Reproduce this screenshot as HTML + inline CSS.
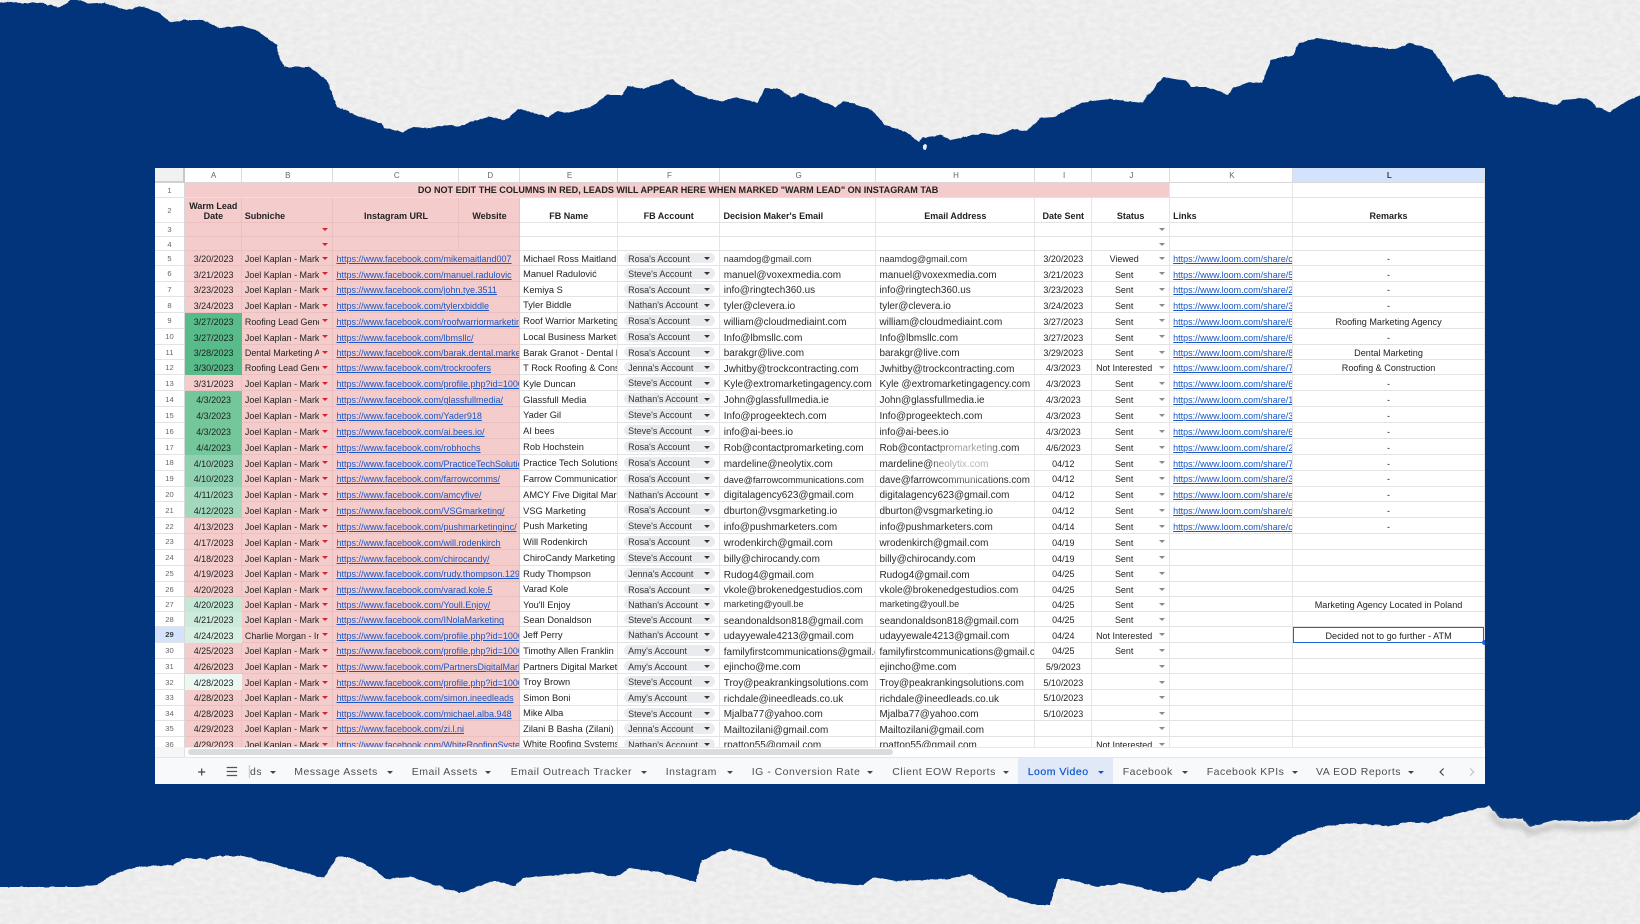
<!DOCTYPE html>
<html lang="en">
<head>
<meta charset="utf-8">
<title>Loom Video Sheet</title>
<style>
html,body{margin:0;padding:0;width:1640px;height:924px;overflow:hidden;background:#01347a}
body{position:relative;font-family:"Liberation Sans",Arial,sans-serif;color:#222}
svg.bg{position:absolute;left:0;top:0}
#sheet{position:absolute;left:155px;top:168px;width:1330px;height:616px;background:#fff;overflow:hidden;filter:blur(.35px)}
#grid{position:absolute;left:0;top:0;width:1330px;height:579px;overflow:hidden;display:grid;
grid-template-columns:30px 56.7px 91.8px 126px 61px 97.5px 102.5px 155.7px 159.3px 56.7px 78px 123px 191.8px;
grid-template-rows:15px 15px 24.5px 14.5px 14px 15px 15.7px 15.6px 15.7px 16px 15.7px 15.3px 15.5px 16px 15.8px 15.7px 16.3px 15.7px 15.8px 15.9px 15.7px 16px 15.6px 16px 15.8px 15.9px 15.1px 15.2px 15.4px 15.3px 16px 15.8px 15.5px 15.7px 15.3px 15.7px 15.3px}
#grid>div{box-sizing:border-box;min-width:0;overflow:hidden;white-space:nowrap;display:flex;align-items:center;position:relative;border-right:1px solid #e6e6e6;border-bottom:1px solid #e3e3e3;font-size:9.2px}
#grid>.h{justify-content:center;font-size:8px;color:#666;border-bottom:1px solid #d8d8d8;border-right:1px solid #dcdcdc;padding-left:1.5px}
#grid>.cn{background:#f1f1f1;border-right:2px solid #c8c8c8;border-bottom:2px solid #d0d0d0}
#grid>.sel{background:#d3e3fd;color:#3c4043;font-weight:700}
#grid>.rn{justify-content:center;font-size:7.6px;color:#666;border-right:1px solid #d8d8d8;padding-top:1px}
#grid>.rs{background:#d3e3fd;color:#3c4043;font-weight:700}
#grid>.p{background:#f4cccc;border-right-color:#ecc0c0;border-bottom-color:#ecc0c0}
#grid>.tt{justify-content:center;font-weight:700;font-size:9.05px;background:#f4cccc;color:#222;padding-left:2px}
#grid>.hd{font-weight:700;font-size:9px;align-items:flex-end;padding-bottom:1px;justify-content:center}
#grid>.lh{justify-content:flex-start;padding-left:3px}
#grid>.wl{white-space:normal;text-align:center;line-height:10.5px;padding-bottom:0;font-size:9px;padding-left:1px}
#grid>.d{justify-content:center;font-size:8.95px;background:#f4cccc;border-right-color:#ecc0c0;border-bottom-color:#ecc0c0;padding-left:1.5px;padding-top:2.5px}
#grid>.g1{background:#57bb8a;border-color:#57bb8a}
#grid>.g2{background:#74c69b;border-color:#74c69b}
#grid>.g3{background:#8fd1b0;border-color:#8fd1b0}
#grid>.g4{background:#a2d9bd;border-color:#a2d9bd}
#grid>.g5{background:#c4e7d6;border-color:#c4e7d6}
#grid>.g6{background:#cdebdc;border-color:#cdebdc}
#grid>.g7{background:#d8efe3;border-color:#d8efe3}
#grid>.g8{background:#ebf7f1;border-color:#ebf7f1}
#grid>.s{padding-left:3.2px;padding-top:2.5px;font-size:8.95px;background:#f4cccc;border-right-color:#ecc0c0;border-bottom-color:#ecc0c0}
#grid>.s::after{content:"";position:absolute;right:0;top:0;bottom:0;width:13.3px;background:#f4cccc}
#grid>.s::before{content:"";position:absolute;z-index:1;right:4.4px;top:50%;margin-top:-1px;border-left:3px solid transparent;border-right:3px solid transparent;border-top:3.2px solid #d8222a}
#grid>.l{padding-left:3px;padding-top:2.5px;font-size:9px;color:#1a56c4;text-decoration:underline;background:#f4cccc;border-right-color:#ecc0c0;border-bottom-color:#ecc0c0;grid-column:span 2}
#grid>.k{padding-left:3px;padding-top:2.5px;font-size:9px;color:#1a56c4;text-decoration:underline}
#grid>.n{padding-left:2.7px;font-size:9.25px;padding-top:1.5px}
#grid>.e{padding-left:3.3px;font-size:9.95px;padding-top:4px;color:#2a2a2a}
#grid>.e9{padding-left:3.3px;font-size:9px;color:#333;padding-top:1px}
#grid>.c{justify-content:center;font-size:8.95px;padding-top:2.5px}
#grid>.r{justify-content:center;font-size:9.1px;padding-top:2.5px}
#grid>.st{justify-content:center;padding-right:13px;font-size:8.95px;padding-top:2.5px}
#grid>.st::after{content:"";position:absolute;right:4.2px;top:50%;margin-top:-1px;border-left:3px solid transparent;border-right:3px solid transparent;border-top:3px solid #8a8a8a}
#grid>.fa b{display:block;position:absolute;left:5.8px;top:2px;bottom:2px;width:91.7px;border-radius:6px;background:#e9ebef;font-weight:400;font-size:9px;line-height:12px;padding-left:4.4px;box-sizing:border-box;color:#333}
#grid>.fa b::after{content:"";position:absolute;right:5.3px;top:50%;margin-top:-1px;border-left:3px solid transparent;border-right:3px solid transparent;border-top:3.2px solid #333}
#selbox{position:absolute;left:1138px;top:459.4px;width:190.5px;height:15.2px;box-sizing:border-box;border:1.3px solid #1a66d8}
#handle{position:absolute;left:1326.5px;top:471.7px;width:5px;height:5px;border-radius:50%;background:#1a66d8}
#fade{position:absolute;left:775px;top:270px;width:80px;height:46px;background:radial-gradient(ellipse at center,rgba(255,255,255,.72),rgba(255,255,255,.55) 45%,rgba(255,255,255,0) 75%)}
#track{position:absolute;left:0;top:579px;width:1330px;height:10px;background:#fff;border-top:1px solid #e8e8e8;box-sizing:border-box}
#gut{position:absolute;left:0;top:579px;width:30px;height:10px;background:#f6f6f6;border-right:1px solid #e2e2e2;box-sizing:border-box}
#thumb{position:absolute;left:32.7px;top:581.3px;width:705.6px;height:5.7px;border-radius:3px;background:#dadce0}
#tabs{position:absolute;left:0;top:589px;width:1330px;height:27px;background:#f8f9fa;border-top:1px solid #e6e6e6;box-sizing:border-box}
#tabs span{position:absolute;top:0;line-height:29px;font-size:10.5px;letter-spacing:.5px;color:#4b5054;white-space:nowrap}
#tabs i{position:absolute;top:13px;border-left:3px solid transparent;border-right:3px solid transparent;border-top:3.2px solid #444}
#loom{position:absolute;left:863.3px;top:0;width:95px;height:26px;background:#e1e9f8}
#tabs span.on{color:#0b57d0;-webkit-text-stroke:.2px #0b57d0}
#tabs svg{position:absolute;left:0;top:1px}
</style>
</head>
<body>
<svg class="bg" width="1640" height="924" viewBox="0 0 1640 924" xmlns="http://www.w3.org/2000/svg">
<defs>
<filter id="paper" filterUnits="userSpaceOnUse" x="-20" y="-20" width="1680" height="964" color-interpolation-filters="sRGB">
<feTurbulence type="fractalNoise" baseFrequency=".16" numOctaves="3" seed="7" result="n1"/>
<feDisplacementMap in="SourceGraphic" in2="n1" scale="2.5" xChannelSelector="R" yChannelSelector="G" result="shape"/>
<feTurbulence type="fractalNoise" baseFrequency=".14 .22" numOctaves="4" seed="11" result="n2"/>
<feColorMatrix in="n2" type="matrix" values=".06 0 0 0 .9  .06 0 0 0 .9  .06 0 0 0 .9  0 0 0 0 1" result="tex"/>
<feComposite in="tex" in2="shape" operator="in"/>
</filter>
<filter id="sh" x="-5%" y="-50%" width="110%" height="200%"><feGaussianBlur stdDeviation="3"/></filter>
</defs>
<rect width="1640" height="924" fill="#01347a"/>
<g filter="url(#paper)">
<polygon fill="#fff" points="-20,-20 1660,-20 1660,95 1640,95 1625,102 1610,112 1597,107 1586,98 1563,100 1557,105 1521,97 1505,97 1492,78 1479,74 1461,77 1453,82 1445,67 1432,50 1411,43 1395,49 1369,47 1348,43 1317,38 1299,43 1293,55 1271,60 1262,83 1251,82 1233,88 1228,95 1207,87 1191,87 1186,81 1163,77 1142,103 1110,99 1084,102 1061,113 1055,117 1040,118 1027,131 1013,129 998,135 982,133 951,140 940,135 922,138 919,142 906,132 885,125 872,110 844,101 836,107 820,100 800,93 792,98 779,89 765,88 758,103 735,97 722,102 696,95 680,85 672,79 643,89 628,86 622,95 607,95 591,107 567,113 557,111 549,117 518,109 505,120 489,117 476,120 458,127 450,125 429,128 413,127 403,132 384,128 382,123 361,117 337,107 327,80 309,67 285,67 280,60 277,45 256,30 241,26 220,28 201,20 183,20 170,22 157,12 141,6 126,10 105,3 89,4 73,-2 65,5 58,7 42,3 21,3 0,2 -20,2"/>
<ellipse fill="#fff" cx="925" cy="147" rx="2.2" ry="3"/>
<polygon fill="#fff" points="-20,887 0,887 31,887 78,887 97,885 112,875 136,867 173,865 186,858 207,859 214,856 243,856 324,878 337,857 350,857 371,867 386,879 411,877 460,893 494,881 515,886 523,878 591,872 616,877 630,868 662,873 696,882 701,861 717,853 731,849 764,858 774,867 820,882 830,883 862,885 875,877 896,881 948,879 969,874 993,887 1008,897 1037,905 1050,905 1058,879 1068,879 1097,887 1123,883 1163,893 1186,890 1198,878 1211,881 1220,871 1244,864 1251,856 1270,854 1293,837 1322,827 1351,823 1390,826 1408,822 1429,823 1445,817 1463,812 1489,806 1500,818 1523,819 1529,827 1555,820 1584,822 1628,820 1640,812 1660,812 1660,944 -20,944"/>
</g>
<path d="M1490,812 L1500,824 L1523,825 L1529,833 L1555,826 L1584,828 L1628,826 L1640,818" fill="none" stroke="#9a9a9a" stroke-width="5" opacity=".55" filter="url(#sh)"/>
</svg>

<div id="sheet">
<div id="grid">
<!-- header -->
<div class="h cn"></div><div class="h">A</div><div class="h">B</div><div class="h">C</div><div class="h">D</div><div class="h">E</div><div class="h">F</div><div class="h">G</div><div class="h">H</div><div class="h">I</div><div class="h">J</div><div class="h">K</div><div class="h sel">L</div>
<!-- 1 -->
<div class="rn">1</div><div class="tt" style="grid-column:span 10">DO NOT EDIT THE COLUMNS IN RED, LEADS WILL APPEAR HERE WHEN MARKED "WARM LEAD" ON INSTAGRAM TAB</div><div></div><div></div>
<!-- 2 -->
<div class="rn">2</div><div class="hd p wl">Warm Lead<br>Date</div><div class="hd p lh">Subniche</div><div class="hd p">Instagram URL</div><div class="hd p">Website</div><div class="hd">FB Name</div><div class="hd">FB Account</div><div class="hd lh">Decision Maker's Email</div><div class="hd">Email Address</div><div class="hd">Date Sent</div><div class="hd">Status</div><div class="hd lh">Links</div><div class="hd">Remarks</div>
<!-- 3 -->
<div class="rn">3</div><div class="p"></div><div class="s"></div><div class="p"></div><div class="p"></div><div></div><div></div><div></div><div></div><div></div><div class="st"></div><div></div><div></div>
<!-- 4 -->
<div class="rn">4</div><div class="p"></div><div class="s"></div><div class="p"></div><div class="p"></div><div></div><div></div><div></div><div></div><div></div><div class="st"></div><div></div><div></div>
<!-- 5 -->
<div class="rn">5</div><div class="d">3/20/2023</div><div class="s">Joel Kaplan - Marketing</div><div class="l">https://www.facebook.com/mikemaitland007</div><div class="n">Michael Ross Maitland</div><div class="fa"><b>Rosa's Account</b></div><div class="e9">naamdog@gmail.com</div><div class="e9">naamdog@gmail.com</div><div class="c">3/20/2023</div><div class="st">Viewed</div><div class="k">https://www.loom.com/share/c</div><div class="r">-</div>
<!-- 6 -->
<div class="rn">6</div><div class="d">3/21/2023</div><div class="s">Joel Kaplan - Marketing</div><div class="l">https://www.facebook.com/manuel.radulovic</div><div class="n">Manuel Radulović</div><div class="fa"><b>Steve's Account</b></div><div class="e">manuel@voxexmedia.com</div><div class="e">manuel@voxexmedia.com</div><div class="c">3/21/2023</div><div class="st">Sent</div><div class="k">https://www.loom.com/share/5</div><div class="r">-</div>
<!-- 7 -->
<div class="rn">7</div><div class="d">3/23/2023</div><div class="s">Joel Kaplan - Marketing</div><div class="l">https://www.facebook.com/john.tye.3511</div><div class="n">Kemiya S</div><div class="fa"><b>Rosa's Account</b></div><div class="e">info@ringtech360.us</div><div class="e">info@ringtech360.us</div><div class="c">3/23/2023</div><div class="st">Sent</div><div class="k">https://www.loom.com/share/2</div><div class="r">-</div>
<!-- 8 -->
<div class="rn">8</div><div class="d">3/24/2023</div><div class="s">Joel Kaplan - Marketing</div><div class="l">https://www.facebook.com/tylerxbiddle</div><div class="n">Tyler Biddle</div><div class="fa"><b>Nathan's Account</b></div><div class="e">tyler@clevera.io</div><div class="e">tyler@clevera.io</div><div class="c">3/24/2023</div><div class="st">Sent</div><div class="k">https://www.loom.com/share/3</div><div class="r">-</div>
<!-- 9 -->
<div class="rn">9</div><div class="d g1">3/27/2023</div><div class="s">Roofing Lead Generation</div><div class="l">https://www.facebook.com/roofwarriormarketing</div><div class="n">Roof Warrior Marketing</div><div class="fa"><b>Rosa's Account</b></div><div class="e">william@cloudmediaint.com</div><div class="e">william@cloudmediaint.com</div><div class="c">3/27/2023</div><div class="st">Sent</div><div class="k">https://www.loom.com/share/6</div><div class="r">Roofing Marketing Agency</div>
<!-- 10 -->
<div class="rn">10</div><div class="d g1">3/27/2023</div><div class="s">Joel Kaplan - Marketing</div><div class="l">https://www.facebook.com/lbmsllc/</div><div class="n">Local Business Marketing</div><div class="fa"><b>Rosa's Account</b></div><div class="e">Info@lbmsllc.com</div><div class="e">Info@lbmsllc.com</div><div class="c">3/27/2023</div><div class="st">Sent</div><div class="k">https://www.loom.com/share/6</div><div class="r">-</div>
<!-- 11 -->
<div class="rn">11</div><div class="d g1">3/28/2023</div><div class="s">Dental Marketing Agency</div><div class="l">https://www.facebook.com/barak.dental.marketing</div><div class="n">Barak Granot - Dental Marketing</div><div class="fa"><b>Rosa's Account</b></div><div class="e">barakgr@live.com</div><div class="e">barakgr@live.com</div><div class="c">3/29/2023</div><div class="st">Sent</div><div class="k">https://www.loom.com/share/8</div><div class="r">Dental Marketing</div>
<!-- 12 -->
<div class="rn">12</div><div class="d g1">3/30/2023</div><div class="s">Roofing Lead Generation</div><div class="l">https://www.facebook.com/trockroofers</div><div class="n">T Rock Roofing &amp; Construction</div><div class="fa"><b>Jenna's Account</b></div><div class="e">Jwhitby@trockcontracting.com</div><div class="e">Jwhitby@trockcontracting.com</div><div class="c">4/3/2023</div><div class="st">Not Interested</div><div class="k">https://www.loom.com/share/7</div><div class="r">Roofing &amp; Construction</div>
<!-- 13 -->
<div class="rn">13</div><div class="d">3/31/2023</div><div class="s">Joel Kaplan - Marketing</div><div class="l">https://www.facebook.com/profile.php?id=1000</div><div class="n">Kyle Duncan</div><div class="fa"><b>Steve's Account</b></div><div class="e">Kyle@extromarketingagency.com</div><div class="e">Kyle @extromarketingagency.com</div><div class="c">4/3/2023</div><div class="st">Sent</div><div class="k">https://www.loom.com/share/6</div><div class="r">-</div>
<!-- 14 -->
<div class="rn">14</div><div class="d g2">4/3/2023</div><div class="s">Joel Kaplan - Marketing</div><div class="l">https://www.facebook.com/glassfullmedia/</div><div class="n">Glassfull Media</div><div class="fa"><b>Nathan's Account</b></div><div class="e">John@glassfullmedia.ie</div><div class="e">John@glassfullmedia.ie</div><div class="c">4/3/2023</div><div class="st">Sent</div><div class="k">https://www.loom.com/share/1</div><div class="r">-</div>
<!-- 15 -->
<div class="rn">15</div><div class="d g2">4/3/2023</div><div class="s">Joel Kaplan - Marketing</div><div class="l">https://www.facebook.com/Yader918</div><div class="n">Yader Gil</div><div class="fa"><b>Steve's Account</b></div><div class="e">Info@progeektech.com</div><div class="e">Info@progeektech.com</div><div class="c">4/3/2023</div><div class="st">Sent</div><div class="k">https://www.loom.com/share/3</div><div class="r">-</div>
<!-- 16 -->
<div class="rn">16</div><div class="d g2">4/3/2023</div><div class="s">Joel Kaplan - Marketing</div><div class="l">https://www.facebook.com/ai.bees.io/</div><div class="n">AI bees</div><div class="fa"><b>Steve's Account</b></div><div class="e">info@ai-bees.io</div><div class="e">info@ai-bees.io</div><div class="c">4/3/2023</div><div class="st">Sent</div><div class="k">https://www.loom.com/share/6</div><div class="r">-</div>
<!-- 17 -->
<div class="rn">17</div><div class="d g2">4/4/2023</div><div class="s">Joel Kaplan - Marketing</div><div class="l">https://www.facebook.com/robhochs</div><div class="n">Rob Hochstein</div><div class="fa"><b>Rosa's Account</b></div><div class="e">Rob@contactpromarketing.com</div><div class="e">Rob@contactpromarketing.com</div><div class="c">4/6/2023</div><div class="st">Sent</div><div class="k">https://www.loom.com/share/2</div><div class="r">-</div>
<!-- 18 -->
<div class="rn">18</div><div class="d g3">4/10/2023</div><div class="s">Joel Kaplan - Marketing</div><div class="l">https://www.facebook.com/PracticeTechSolutions</div><div class="n">Practice Tech Solutions</div><div class="fa"><b>Rosa's Account</b></div><div class="e">mardeline@neolytix.com</div><div class="e">mardeline@neolytix.com</div><div class="c">04/12</div><div class="st">Sent</div><div class="k">https://www.loom.com/share/7</div><div class="r">-</div>
<!-- 19 -->
<div class="rn">19</div><div class="d g3">4/10/2023</div><div class="s">Joel Kaplan - Marketing</div><div class="l">https://www.facebook.com/farrowcomms/</div><div class="n">Farrow Communications</div><div class="fa"><b>Rosa's Account</b></div><div class="e" style="font-size:9.15px">dave@farrowcommunications.com</div><div class="e" style="font-size:9.8px">dave@farrowcommunications.com</div><div class="c">04/12</div><div class="st">Sent</div><div class="k">https://www.loom.com/share/3</div><div class="r">-</div>
<!-- 20 -->
<div class="rn">20</div><div class="d g4">4/11/2023</div><div class="s">Joel Kaplan - Marketing</div><div class="l">https://www.facebook.com/amcyfive/</div><div class="n">AMCY Five Digital Marketing</div><div class="fa"><b>Nathan's Account</b></div><div class="e">digitalagency623@gmail.com</div><div class="e">digitalagency623@gmail.com</div><div class="c">04/12</div><div class="st">Sent</div><div class="k">https://www.loom.com/share/e</div><div class="r">-</div>
<!-- 21 -->
<div class="rn">21</div><div class="d g4">4/12/2023</div><div class="s">Joel Kaplan - Marketing</div><div class="l">https://www.facebook.com/VSGmarketing/</div><div class="n">VSG Marketing</div><div class="fa"><b>Rosa's Account</b></div><div class="e">dburton@vsgmarketing.io</div><div class="e">dburton@vsgmarketing.io</div><div class="c">04/12</div><div class="st">Sent</div><div class="k">https://www.loom.com/share/d</div><div class="r">-</div>
<!-- 22 -->
<div class="rn">22</div><div class="d">4/13/2023</div><div class="s">Joel Kaplan - Marketing</div><div class="l">https://www.facebook.com/pushmarketinginc/</div><div class="n">Push Marketing</div><div class="fa"><b>Steve's Account</b></div><div class="e">info@pushmarketers.com</div><div class="e">info@pushmarketers.com</div><div class="c">04/14</div><div class="st">Sent</div><div class="k">https://www.loom.com/share/c</div><div class="r">-</div>
<!-- 23 -->
<div class="rn">23</div><div class="d">4/17/2023</div><div class="s">Joel Kaplan - Marketing</div><div class="l">https://www.facebook.com/will.rodenkirch</div><div class="n">Will Rodenkirch</div><div class="fa"><b>Rosa's Account</b></div><div class="e">wrodenkirch@gmail.com</div><div class="e">wrodenkirch@gmail.com</div><div class="c">04/19</div><div class="st">Sent</div><div></div><div></div>
<!-- 24 -->
<div class="rn">24</div><div class="d">4/18/2023</div><div class="s">Joel Kaplan - Marketing</div><div class="l">https://www.facebook.com/chirocandy/</div><div class="n">ChiroCandy Marketing</div><div class="fa"><b>Steve's Account</b></div><div class="e">billy@chirocandy.com</div><div class="e">billy@chirocandy.com</div><div class="c">04/19</div><div class="st">Sent</div><div></div><div></div>
<!-- 25 -->
<div class="rn">25</div><div class="d">4/19/2023</div><div class="s">Joel Kaplan - Marketing</div><div class="l">https://www.facebook.com/rudy.thompson.129</div><div class="n">Rudy Thompson</div><div class="fa"><b>Jenna's Account</b></div><div class="e">Rudog4@gmail.com</div><div class="e">Rudog4@gmail.com</div><div class="c">04/25</div><div class="st">Sent</div><div></div><div></div>
<!-- 26 -->
<div class="rn">26</div><div class="d">4/20/2023</div><div class="s">Joel Kaplan - Marketing</div><div class="l">https://www.facebook.com/varad.kole.5</div><div class="n">Varad Kole</div><div class="fa"><b>Rosa's Account</b></div><div class="e">vkole@brokenedgestudios.com</div><div class="e">vkole@brokenedgestudios.com</div><div class="c">04/25</div><div class="st">Sent</div><div></div><div></div>
<!-- 27 -->
<div class="rn">27</div><div class="d g5">4/20/2023</div><div class="s">Joel Kaplan - Marketing</div><div class="l">https://www.facebook.com/Youll.Enjoy/</div><div class="n">You'll Enjoy</div><div class="fa"><b>Nathan's Account</b></div><div class="e9">marketing@youll.be</div><div class="e9">marketing@youll.be</div><div class="c">04/25</div><div class="st">Sent</div><div></div><div class="r">Marketing Agency Located in Poland</div>
<!-- 28 -->
<div class="rn">28</div><div class="d g6">4/21/2023</div><div class="s">Joel Kaplan - Marketing</div><div class="l">https://www.facebook.com/INolaMarketing</div><div class="n">Sean Donaldson</div><div class="fa"><b>Steve's Account</b></div><div class="e">seandonaldson818@gmail.com</div><div class="e">seandonaldson818@gmail.com</div><div class="c">04/25</div><div class="st">Sent</div><div></div><div></div>
<!-- 29 -->
<div class="rn rs">29</div><div class="d g7">4/24/2023</div><div class="s">Charlie Morgan - Instagram</div><div class="l">https://www.facebook.com/profile.php?id=1000</div><div class="n">Jeff Perry</div><div class="fa"><b>Nathan's Account</b></div><div class="e">udayyewale4213@gmail.com</div><div class="e">udayyewale4213@gmail.com</div><div class="c">04/24</div><div class="st">Not Interested</div><div></div><div class="r">Decided not to go further - ATM</div>
<!-- 30 -->
<div class="rn">30</div><div class="d">4/25/2023</div><div class="s">Joel Kaplan - Marketing</div><div class="l">https://www.facebook.com/profile.php?id=1000</div><div class="n">Timothy Allen Franklin</div><div class="fa"><b>Amy's Account</b></div><div class="e">familyfirstcommunications@gmail.com</div><div class="e">familyfirstcommunications@gmail.com</div><div class="c">04/25</div><div class="st">Sent</div><div></div><div></div>
<!-- 31 -->
<div class="rn">31</div><div class="d">4/26/2023</div><div class="s">Joel Kaplan - Marketing</div><div class="l">https://www.facebook.com/PartnersDigitalMarketing</div><div class="n">Partners Digital Marketing</div><div class="fa"><b>Amy's Account</b></div><div class="e">ejincho@me.com</div><div class="e">ejincho@me.com</div><div class="c">5/9/2023</div><div class="st"></div><div></div><div></div>
<!-- 32 -->
<div class="rn">32</div><div class="d g8">4/28/2023</div><div class="s">Joel Kaplan - Marketing</div><div class="l">https://www.facebook.com/profile.php?id=1000</div><div class="n">Troy Brown</div><div class="fa"><b>Steve's Account</b></div><div class="e">Troy@peakrankingsolutions.com</div><div class="e">Troy@peakrankingsolutions.com</div><div class="c">5/10/2023</div><div class="st"></div><div></div><div></div>
<!-- 33 -->
<div class="rn">33</div><div class="d">4/28/2023</div><div class="s">Joel Kaplan - Marketing</div><div class="l">https://www.facebook.com/simon.ineedleads</div><div class="n">Simon Boni</div><div class="fa"><b>Amy's Account</b></div><div class="e">richdale@ineedleads.co.uk</div><div class="e">richdale@ineedleads.co.uk</div><div class="c">5/10/2023</div><div class="st"></div><div></div><div></div>
<!-- 34 -->
<div class="rn">34</div><div class="d">4/28/2023</div><div class="s">Joel Kaplan - Marketing</div><div class="l">https://www.facebook.com/michael.alba.948</div><div class="n">Mike Alba</div><div class="fa"><b>Steve's Account</b></div><div class="e">Mjalba77@yahoo.com</div><div class="e">Mjalba77@yahoo.com</div><div class="c">5/10/2023</div><div class="st"></div><div></div><div></div>
<!-- 35 -->
<div class="rn">35</div><div class="d">4/29/2023</div><div class="s">Joel Kaplan - Marketing</div><div class="l">https://www.facebook.com/zi.l.ni</div><div class="n">Zilani B Basha (Zilani)</div><div class="fa"><b>Jenna's Account</b></div><div class="e">Mailtozilani@gmail.com</div><div class="e">Mailtozilani@gmail.com</div><div class="c"></div><div class="st"></div><div></div><div></div>
<!-- 36 -->
<div class="rn">36</div><div class="d">4/29/2023</div><div class="s">Joel Kaplan - Marketing</div><div class="l">https://www.facebook.com/WhiteRoofingSystems</div><div class="n">White Roofing Systems</div><div class="fa"><b>Nathan's Account</b></div><div class="e">rpatton55@gmail.com</div><div class="e">rpatton55@gmail.com</div><div class="c"></div><div class="st">Not Interested</div><div></div><div></div>
</div>
<div id="fade"></div>
<div id="selbox"></div>
<div id="handle"></div>
<div id="track"></div>
<div id="gut"></div>
<div id="thumb"></div>
<div id="tabs">
<div id="loom"></div>
<svg width="1330" height="26" viewBox="0 0 1330 26" xmlns="http://www.w3.org/2000/svg">
<path d="M46.7 9.5v7M43.2 13h7" stroke="#444" stroke-width="1.2" fill="none"/>
<path d="M71.7 8.5h10.4M71.7 12.5h10.4M71.7 16.5h10.4" stroke="#555" stroke-width="1.2" fill="none"/>
<path d="M94.3 6v13" stroke="#c4c7c5" stroke-width="1" fill="none"/>
<path d="M1288.6 9.5l-3.5 3.5 3.5 3.5" stroke="#444" stroke-width="1.2" fill="none"/>
<path d="M1315.2 9.5l3.5 3.5-3.5 3.5" stroke="#c2c2c2" stroke-width="1.2" fill="none"/>
</svg>
<span style="left:95px;width:11px;overflow:hidden">ds</span><i style="left:114.5px"></i>
<span style="left:139.3px">Message Assets</span><i style="left:231.5px"></i>
<span style="left:256.7px">Email Assets</span><i style="left:330.2px"></i>
<span style="left:355.7px">Email Outreach Tracker</span><i style="left:485.5px"></i>
<span style="left:510.7px">Instagram</span><i style="left:571.5px"></i>
<span style="left:596.7px">IG - Conversion Rate</span><i style="left:712.2px"></i>
<span style="left:737.3px">Client EOW Reports</span><i style="left:848.2px"></i>
<span class="on" style="left:872.7px">Loom Video</span><i style="left:943.2px;border-top-color:#0b57d0"></i>
<span style="left:967.7px">Facebook</span><i style="left:1026.5px"></i>
<span style="left:1051.7px">Facebook KPIs</span><i style="left:1136.5px"></i>
<span style="left:1161px">VA EOD Reports</span><i style="left:1253.2px"></i>
</div>
</div>
</body>
</html>
